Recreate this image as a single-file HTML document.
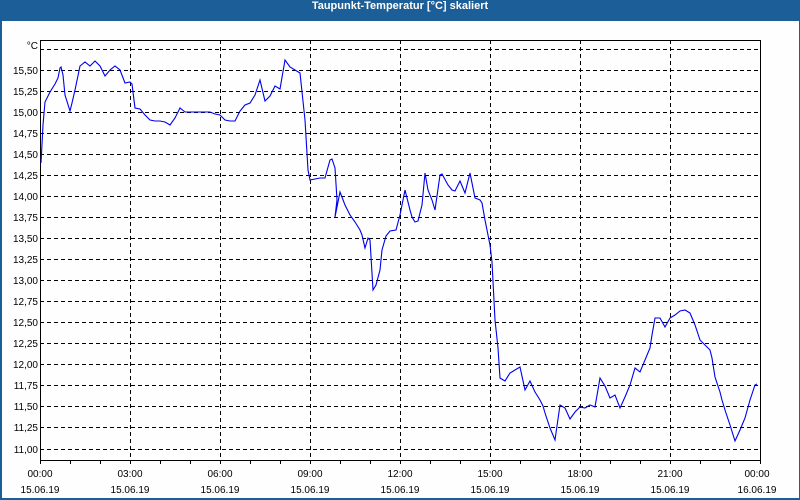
<!DOCTYPE html>
<html><head><meta charset="utf-8"><style>
html,body{margin:0;padding:0;width:800px;height:500px;overflow:hidden;background:#1c5e97}
#w{position:absolute;left:2px;top:21px;width:797px;height:477px;background:#fdfefd}
#t{position:absolute;left:0;top:0;width:800px;height:21px;line-height:19px;text-align:center;color:#fff;font:bold 11px "Liberation Sans",sans-serif}
svg{position:absolute;left:0;top:0}
text{font-family:"Liberation Sans",sans-serif;font-size:10px;fill:#000}
</style></head><body>
<div id="t">Taupunkt-Temperatur [°C] skaliert</div>
<div id="w"></div>
<svg width="800" height="500" viewBox="0 0 800 500">
<g stroke="#000" stroke-width="1" stroke-dasharray="4,3" fill="none" shape-rendering="crispEdges">
<path d="M40 49.5H760M40 70.5H760M40 91.5H760M40 112.5H760M40 133.5H760M40 154.5H760M40 175.5H760M40 196.5H760M40 217.5H760M40 238.5H760M40 259.5H760M40 280.5H760M40 301.5H760M40 322.5H760M40 343.5H760M40 364.5H760M40 385.5H760M40 406.5H760M40 427.5H760M40 449.5H760"/>
<path d="M130.5 40V460M220.5 40V460M310.5 40V460M400.5 40V460M490.5 40V460M580.5 40V460M670.5 40V460"/>
</g>
<g stroke="#000" fill="none" shape-rendering="crispEdges">
<rect x="40.5" y="40.5" width="720" height="420"/>
<path d="M40.5 460V464M70.5 460V464M100.5 460V464M130.5 460V464M160.5 460V464M190.5 460V464M220.5 460V464M250.5 460V464M280.5 460V464M310.5 460V464M340.5 460V464M370.5 460V464M400.5 460V464M430.5 460V464M460.5 460V464M490.5 460V464M520.5 460V464M550.5 460V464M580.5 460V464M610.5 460V464M640.5 460V464M670.5 460V464M700.5 460V464M730.5 460V464M760.5 460V464"/>
</g>
<polyline fill="none" stroke="#0000ee" stroke-width="1.1" points="41,163 43,125 45,102 50,92 55,84 58,78 60,68 61,67 63,75 65,95 70,111 72,103 75,90 80,66 85,62 90,66 95,61 100,66 105,76 110,70 115,66 120,70 125,83 130,82 132,84 135,108 140,109 145,115 150,120 155,121 160,121 165,122 170,125 175,118 180,108 185,112 190,112 200,112 210,112 215,114 220,115 225,120 230,121 235,121 240,111 245,105 250,103 255,95 260,80 265,101 270,96 275,86 280,89 285,60 290,67 295,70 300,73 305,120 308,170 310,180 320,178 325,178 330,160 332,159 335,168 337,200 335,217 340,192 345,205 350,215 355,222 360,230 362,235 365,248 368,238 370,240 373,290 376,285 380,270 382,250 386,236 390,231 396,230 400,215 405,190 410,210 412,217 415,222 418,221 422,205 425,173 428,190 432,200 435,210 440,175 442,174 448,185 452,190 455,191 460,181 465,193 470,173 475,198 480,200 482,203 485,220 490,245 492,262 495,320 498,348 500,378 505,381 510,373 515,370 520,367 525,390 530,381 535,392 540,400 543,406 545,413 550,428 555,440 560,405 565,408 570,419 575,412 580,407 585,408 590,405 595,407 600,378 605,386 610,398 615,395 620,408 625,397 630,385 635,368 640,372 645,360 650,348 652,335 655,318 660,318 665,327 670,318 675,315 680,311 685,310 690,313 695,325 700,340 705,345 710,350 712,358 715,377 720,392 722,400 725,410 730,425 735,441 740,430 745,418 750,400 755,385 757,384"/>
<g text-anchor="end">
<text x="38" y="49">°C</text>
<text x="38" y="74">15,50</text><text x="38" y="95">15,25</text><text x="38" y="116">15,00</text>
<text x="38" y="137">14,75</text><text x="38" y="158">14,50</text><text x="38" y="179">14,25</text>
<text x="38" y="200">14,00</text><text x="38" y="221">13,75</text><text x="38" y="242">13,50</text>
<text x="38" y="263">13,25</text><text x="38" y="284">13,00</text><text x="38" y="305">12,75</text>
<text x="38" y="326">12,50</text><text x="38" y="347">12,25</text><text x="38" y="368">12,00</text>
<text x="38" y="389">11,75</text><text x="38" y="410">11,50</text><text x="38" y="431">11,25</text>
<text x="38" y="453">11,00</text>
</g>
<g text-anchor="middle">
<text x="40" y="477">00:00</text><text x="40" y="493">15.06.19</text>
<text x="130" y="477">03:00</text><text x="130" y="493">15.06.19</text>
<text x="220" y="477">06:00</text><text x="220" y="493">15.06.19</text>
<text x="310" y="477">09:00</text><text x="310" y="493">15.06.19</text>
<text x="400" y="477">12:00</text><text x="400" y="493">15.06.19</text>
<text x="490" y="477">15:00</text><text x="490" y="493">15.06.19</text>
<text x="580" y="477">18:00</text><text x="580" y="493">15.06.19</text>
<text x="670" y="477">21:00</text><text x="670" y="493">15.06.19</text>
<text x="757" y="477">00:00</text><text x="757" y="493">16.06.19</text>
</g>
</svg>
</body></html>
